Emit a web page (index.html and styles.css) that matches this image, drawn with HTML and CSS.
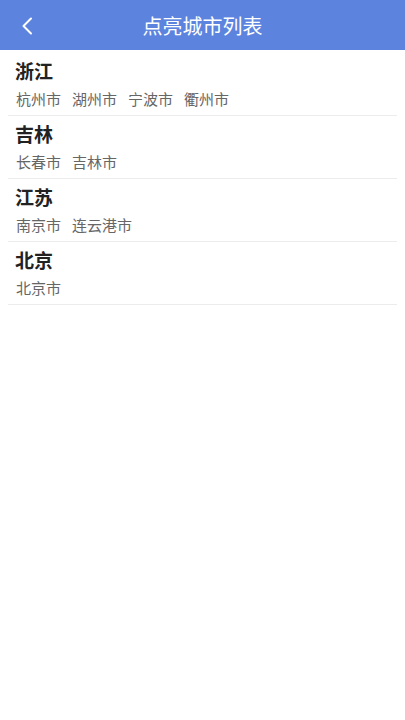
FILE: index.html
```html
<!DOCTYPE html>
<html lang="zh-CN">
<head>
  <meta charset="UTF-8">
  <title>点亮城市列表</title>
  <link rel="stylesheet" href="styles.css">
</head>
<body>

  <div class="header">
    <span class="back">
      <svg width="12" height="18" viewBox="0 0 12 18">
        <path d="M10 1.5 L2.5 9 L10 16.5" fill="none" stroke="#fff" stroke-width="2" stroke-linecap="round" stroke-linejoin="round"/>
      </svg>
    </span>
    <h1>点亮城市列表</h1>
  </div>

  <div class="list">
    <div class="item">
      <div class="province">浙江</div>
      <div class="cities">
        <span>杭州市</span><span>湖州市</span><span>宁波市</span><span>衢州市</span>
      </div>
    </div>
    <div class="item">
      <div class="province">吉林</div>
      <div class="cities">
        <span>长春市</span><span>吉林市</span>
      </div>
    </div>
    <div class="item">
      <div class="province">江苏</div>
      <div class="cities">
        <span>南京市</span><span>连云港市</span>
      </div>
    </div>
    <div class="item">
      <div class="province">北京</div>
      <div class="cities">
        <span>北京市</span>
      </div>
    </div>
  </div>

</body>
</html>
```

FILE: styles.css
```css
body {
  margin: 0;
  font-family: "Noto Sans CJK SC", "Noto Sans", sans-serif;
  background-color: #fff;
}

.header {
  height: 50px;
  background-color: #5c83de;
  display: flex;
  align-items: center;
  justify-content: center;
  position: relative;
}

.header h1 {
  margin: 0;
  color: #fff;
  font-size: 20px;
  font-weight: normal;
}

.back {
  position: absolute;
  left: 21px;
  top: 17px;
  display: flex;
}

.list {
  padding-top: 3px;
}

.item {
  margin: 0 8px;
  padding: 6px 7px;
  border-bottom: 1px solid #ececec;
}

.province {
  font-size: 19px;
  line-height: 24px;
  font-weight: bold;
  color: #222;
}

.cities {
  margin-top: 6px;
  display: flex;
  gap: 11px;
  padding-left: 1px;
  font-size: 15px;
  line-height: 20px;
  color: #666;
}
```
